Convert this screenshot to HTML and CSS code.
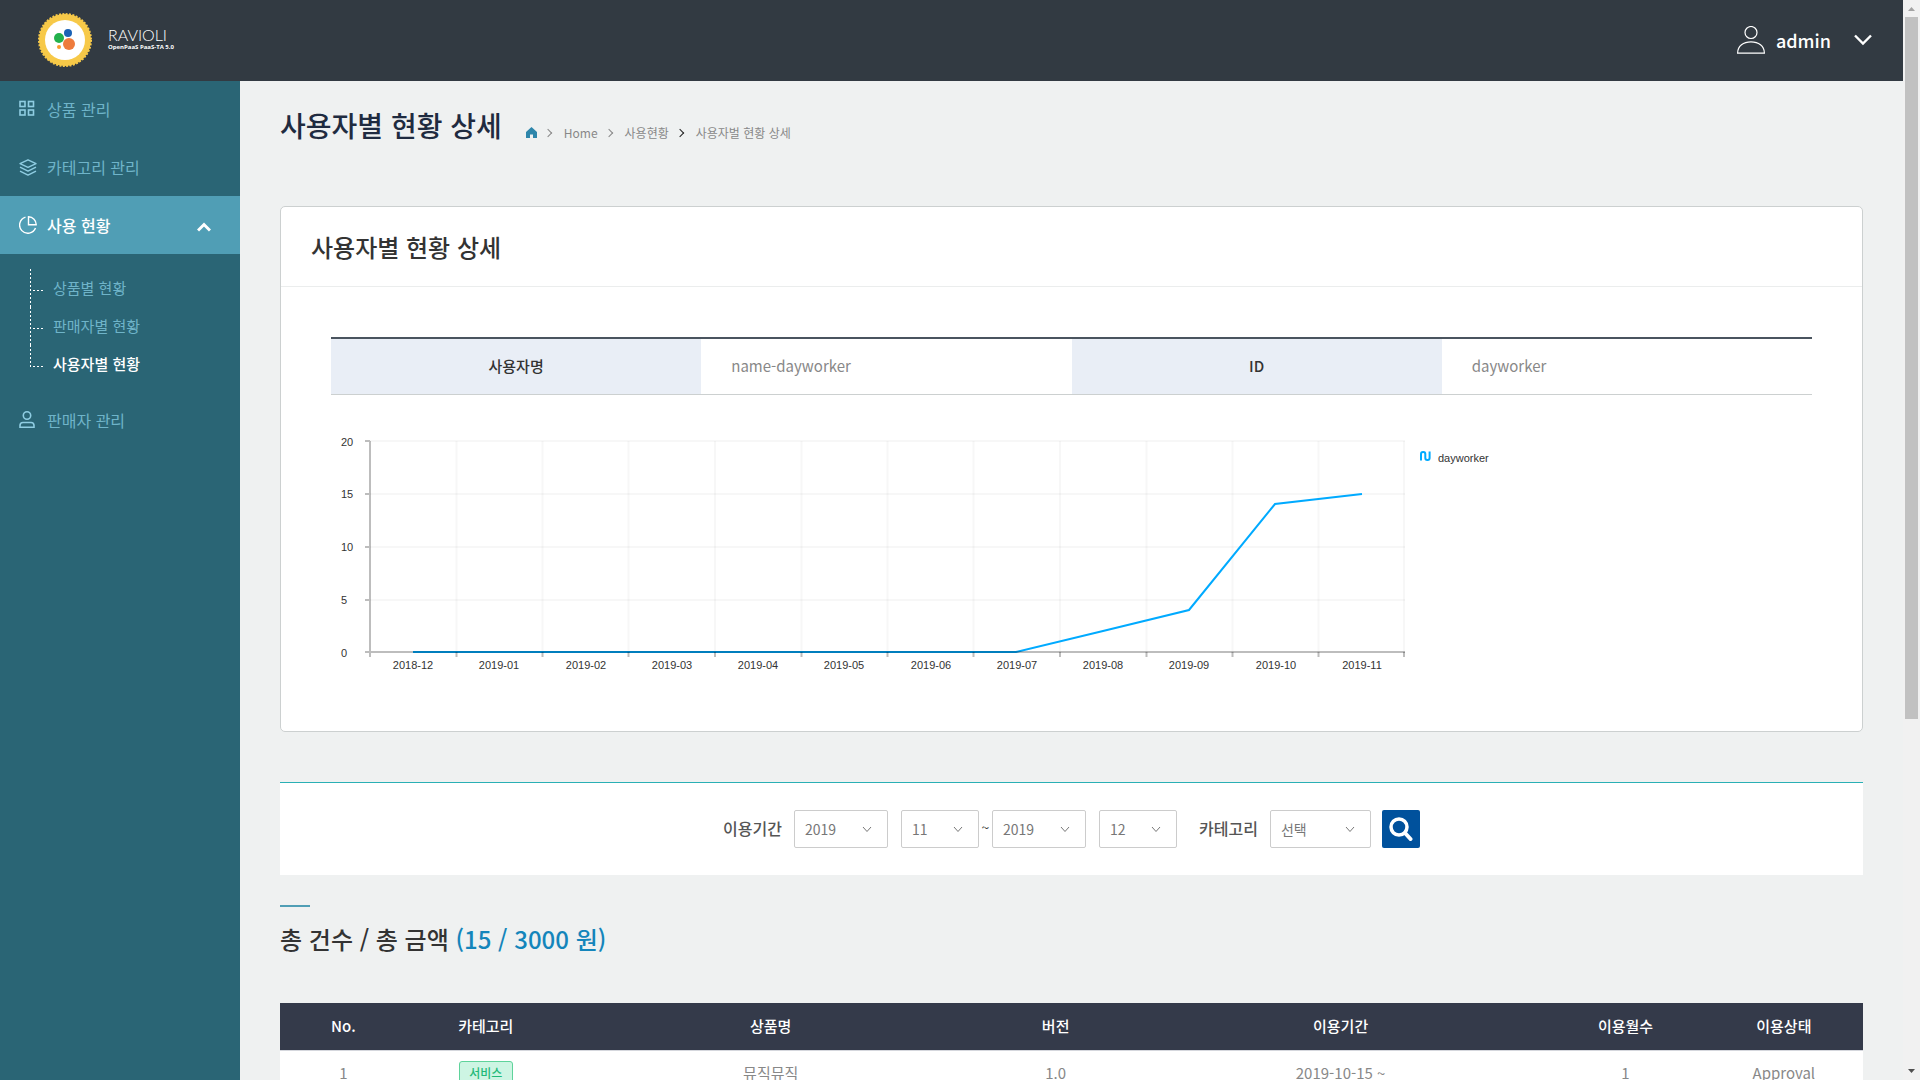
FILE: index.html
```html
<!DOCTYPE html>
<html lang="ko">
<head>
<meta charset="utf-8">
<meta name="viewport" content="width=device-width, initial-scale=1">
<title>사용자별 현황 상세</title>
<link rel="stylesheet" href="styles.css">
</head>
<body>
<div class="app">
  <header class="topbar">
    <a class="logo" href="#">
      <svg class="logo-mark" width="54" height="54" viewBox="0 0 54 54" aria-hidden="true">
        <circle cx="27" cy="27" r="26" fill="none" stroke="#f7c948" stroke-width="2" stroke-dasharray="2 1.4"/>
        <circle cx="27" cy="27" r="26" fill="#f7c948"/>
        <circle cx="27" cy="27" r="20" fill="#fff"/>
        <circle cx="21" cy="25" r="5" fill="#22b14c"/>
        <circle cx="30" cy="20" r="4" fill="#1a62b5"/>
        <circle cx="31" cy="31" r="6" fill="#ee7b3c"/>
        <circle cx="21" cy="34" r="2" fill="#f79a2e"/>
      </svg>
      <span class="logo-text">
        <span class="logo-name">RAVIOLI</span>
        <span class="logo-sub">OpenPaaS PaaS-TA 5.0</span>
      </span>
    </a>
    <button class="account" type="button">
      <svg width="28" height="28" viewBox="0 0 28 28" fill="none" stroke="#fff" stroke-width="1.2" aria-hidden="true">
        <circle cx="14" cy="6.5" r="6"/>
        <path d="M.6 27.2C.6 20 6.500 15.800 14 15.800s13.400 4.200 13.400 11.400z"/>
      </svg>
      <span class="account-name">admin</span>
      <svg class="account-arrow" width="18" height="12" viewBox="0 0 18 12" fill="none" stroke="#fff" stroke-width="2.400" aria-hidden="true"><path d="M1 1.500l8 8 8-8"/></svg>
    </button>
  </header>

  <div class="body">
    <nav class="sidebar">
      <a class="menu" href="#">
        <svg width="18" height="18" viewBox="0 0 18 18" fill="none" stroke="currentColor" stroke-width="1.600" aria-hidden="true">
          <rect x="1" y="1.500" width="5" height="5"/><rect x="9.500" y="1.500" width="5" height="5"/><rect x="1" y="10" width="5" height="5"/><rect x="9.500" y="10" width="5" height="5"/>
        </svg>
        <span>상품 관리</span>
      </a>
      <a class="menu" href="#">
        <svg width="18" height="18" viewBox="0 0 18 18" fill="none" stroke="currentColor" stroke-width="1.400" stroke-linejoin="round" aria-hidden="true">
          <path d="M9 1.800L17 5.600 9 9.400 1 5.600zM1 9.100l8 4 8-4M1 13.100l8 4 8-4"/>
        </svg>
        <span>카테고리 관리</span>
      </a>
      <a class="menu menu-on" href="#">
        <svg width="18" height="18" viewBox="0 0 18 18" fill="none" stroke="currentColor" stroke-width="1.400" aria-hidden="true">
          <path d="M6.500 1.200A8.200 8.200 0 1 0 16.500 12M9.500.8v8h7.700A7.800 7.800 0 0 0 9.500.8z"/>
        </svg>
        <span>사용 현황</span>
        <svg class="menu-arrow" width="14" height="14" viewBox="0 0 14 14" fill="none" stroke="currentColor" stroke-width="3" aria-hidden="true"><path d="M1 12.500l6-6 6 6"/></svg>
      </a>
      <ul class="submenu">
        <li><a href="#">상품별 현황</a></li>
        <li><a href="#">판매자별 현황</a></li>
        <li><a class="sub-on" href="#">사용자별 현황</a></li>
      </ul>
      <a class="menu" href="#">
        <svg width="18" height="18" viewBox="0 0 18 18" fill="none" stroke="currentColor" stroke-width="1.600" aria-hidden="true">
          <circle cx="8" cy="4.500" r="3.700"/>
          <path d="M1 16.200v-1.700a3 3 0 0 1 3-3h8a3 3 0 0 1 3 3v1.700z"/>
        </svg>
        <span>판매자 관리</span>
      </a>
    </nav>

    <main class="content">
      <div class="page-head">
        <h1>사용자별 현황 상세</h1>
        <ol class="crumbs">
          <li><a href="#" aria-label="홈"><svg width="11" height="11" viewBox="0 0 11 11" fill="#2e86ab" aria-hidden="true"><path d="M5.500 0L0 5v6h4V7.500h3V11h4V5z"/></svg></a></li>
          <li><a href="#">Home</a></li>
          <li><a href="#">사용현황</a></li>
          <li><a href="#">사용자벌 현황 상세</a></li>
        </ol>
      </div>

      <section class="card">
        <h2 class="card-title">사용자별 현황 상세</h2>
        <div class="card-body">
          <table class="info">
            <tr>
              <th scope="row">사용자명</th><td>name-dayworker</td>
              <th scope="row">ID</th><td>dayworker</td>
            </tr>
          </table>
          <svg class="chart" width="1200" height="286" viewBox="0 0 1200 286" role="img" aria-label="월별 이용 건수">
            <g class="grid">
              <path d="M39 46H1074M39 99H1074M39 152H1074M39 205H1074"/>
              <path d="M125.500 46V257M211.500 46V257M297.500 46V257M384 46V257M470.500 46V257M556.500 46V257M642.500 46V257M729 46V257M815.500 46V257M901.500 46V257M987.500 46V257M1073 46V257"/>
            </g>
            <path class="series" d="M82 257H685L772 236 858 215 944 109 1031 99"/>
            <g class="axis">
              <path d="M39 46V262M34 257H1074M34 46H39M34 99H39M34 152H39M34 205H39"/>
              <path d="M125.500 257V262M211.500 257V262M297.500 257V262M384 257V262M470.500 257V262M556.500 257V262M642.500 257V262M729 257V262M815.500 257V262M901.500 257V262M987.500 257V262M1073 257V262"/>
            </g>
            <g class="labels">
              <text x="10" y="51">20</text><text x="10" y="103">15</text><text x="10" y="156">10</text><text x="10" y="209">5</text><text x="10" y="262">0</text>
            </g>
            <g class="labels labels-x">
              <text x="82" y="274">2018-12</text><text x="168" y="274">2019-01</text><text x="255" y="274">2019-02</text><text x="341" y="274">2019-03</text><text x="427" y="274">2019-04</text><text x="513" y="274">2019-05</text><text x="600" y="274">2019-06</text><text x="686" y="274">2019-07</text><text x="772" y="274">2019-08</text><text x="858" y="274">2019-09</text><text x="945" y="274">2019-10</text><text x="1031" y="274">2019-11</text>
            </g>
            <path class="series" d="M1090 65.500V59a2 2 0 0 1 2-2h.3a2 2 0 0 1 2 2V63a2 2 0 0 0 2 2h.3a2 2 0 0 0 2-2V56.500"/>
            <text class="labels" x="1107" y="67">dayworker</text>
          </svg>
        </div>
      </section>

      <form class="filter">
        <label class="filter-label" for="fy">이용기간</label>
        <select id="fy" class="sel sel-year"><option>2019</option></select>
        <select class="sel sel-month" aria-label="시작 월"><option>11</option></select>
        <span class="tilde">~</span>
        <select class="sel sel-year" aria-label="종료 연도"><option>2019</option></select>
        <select class="sel sel-month" aria-label="종료 월"><option>12</option></select>
        <label class="filter-label filter-next" for="cat">카테고리</label>
        <select id="cat" class="sel sel-cat"><option>선택</option></select>
        <button class="search" type="button" aria-label="검색">
          <svg width="24" height="24" viewBox="0 0 24 24" fill="none" stroke="#fff" aria-hidden="true"><circle cx="10" cy="10" r="8" stroke-width="3.500"/><path d="M16 16l5.500 6" stroke-width="4" stroke-linecap="round"/></svg>
        </button>
      </form>

      <h2 class="total">총 건수 / 총 금액 <span>(15 / 3000 원)</span></h2>

      <table class="list">
        <colgroup><col class="c8"><col class="c10"><col class="c26"><col class="c10"><col class="c26"><col class="c10"><col class="c10"></colgroup>
        <thead>
          <tr><th>No.</th><th>카테고리</th><th>상품명</th><th>버전</th><th>이용기간</th><th>이용월수</th><th>이용상태</th></tr>
        </thead>
        <tbody>
          <tr><td>1</td><td><span class="badge">서비스</span></td><td>뮤직뮤직</td><td>1.0</td><td>2019-10-15 ~</td><td>1</td><td>Approval</td></tr>
        </tbody>
      </table>
    </main>
  </div>
</div>
<div class="scroll" aria-hidden="true">
  <svg width="17" height="17" viewBox="0 0 17 17" fill="#a3a3a3"><path d="M5 11l3.500-4 3.500 4z"/></svg>
  <div class="thumb"></div>
  <svg class="scroll-down" width="17" height="17" viewBox="0 0 17 17" fill="#505050"><path d="M5 6l3.500 4L12 6z"/></svg>
</div>
</body>
</html>
```
FILE: styles.css
```css
* {
  box-sizing: border-box;
}

body {
  margin: 0;
  background: #eff1f1;
  color: #333;
  font-family: "Noto Sans CJK KR", sans-serif;
  font-size: 15px;
}

a {
  color: inherit;
  text-decoration: none;
}

h1,
h2,
ol,
ul {
  margin: 0;
  padding: 0;
  list-style: none;
}

.app {
  display: flex;
  flex-direction: column;
  height: 100vh;
  padding-right: 17px;
  overflow: hidden;
}

/* Top bar */
.topbar {
  position: relative;
  display: flex;
  flex: none;
  align-items: center;
  justify-content: space-between;
  height: 80px;
  padding: 0 31px 0 38px;
  background: #323a42;
  box-shadow: 0 1px 0 #323a42;
}

.logo {
  display: flex;
  align-items: center;
  gap: 16px;
  color: #fff;
}

.logo-text {
  display: flex;
  flex-direction: column;
}

.logo-name {
  font: 300 16px/14px Lato, sans-serif;
}

.logo-sub {
  font: 700 6px/10px "Open Sans", sans-serif;
}

.account {
  display: flex;
  align-items: center;
  gap: 11px;
  padding: 0;
  border: 0;
  background: none;
  color: #fff;
  font: 500 18px/28px "Noto Sans CJK KR", sans-serif;
}

.account-arrow {
  margin-left: 12px;
}

.body {
  display: flex;
  flex: 1;
  min-height: 0;
}

/* Side menu */
.sidebar {
  flex: none;
  width: 240px;
  background: #2a6575;
}

.menu {
  display: flex;
  align-items: center;
  gap: 10px;
  height: 58px;
  padding: 0 29px 0 19px;
  color: #6fb4c9;
  font-size: 16px;
}

.menu svg {
  color: #8fcde2;
}

.menu-on,
.menu-on svg {
  color: #fff;
}

.menu-on {
  background: #509eb5;
  font-weight: 500;
}

.menu-arrow {
  margin-left: auto;
}

.submenu {
  padding: 15px 0 8px 30px;
}

.submenu li {
  position: relative;
  height: 38px;
  padding-left: 23px;
  color: #6fb4c9;
  line-height: 38px;
}

.submenu li::before {
  position: absolute;
  top: 0;
  left: 0;
  width: 1px;
  height: 38px;
  background: repeating-linear-gradient(#fff 0 2px, transparent 2px 4px);
  content: "";
}

.submenu li:last-child::before {
  height: 22px;
}

.submenu li::after {
  position: absolute;
  top: 21px;
  left: 1px;
  width: 12px;
  height: 1px;
  background: repeating-linear-gradient(90deg, transparent 0 2px, #fff 2px 4px);
  content: "";
}

.sub-on {
  color: #fff;
  font-weight: 500;
}

/* Main column */
.content {
  flex: 1;
  min-width: 0;
  padding: 26px 40px 40px;
}

.page-head {
  display: flex;
  align-items: flex-start;
  gap: 24px;
  height: 40px;
  margin-bottom: 60px;
}

.page-head h1 {
  color: #1f2b40;
  font-size: 28px;
  font-weight: 500;
  line-height: 38px;
}

.crumbs {
  display: flex;
  align-items: center;
  padding-top: 18px;
  color: #888;
  font-size: 12px;
  line-height: 18px;
}

.crumbs li {
  display: flex;
  align-items: center;
}

.crumbs li + li::before {
  width: 5px;
  height: 5px;
  margin: 0 13px 0 8px;
  border: solid #888;
  border-width: 1px 1px 0 0;
  transform: rotate(45deg);
  content: "";
}

.crumbs li:last-child::before {
  border-color: #222;
}

.card {
  border: 1px solid #ccd0d0;
  border-radius: 5px;
  background: #fff;
}

.card-title {
  padding: 0 30px;
  border-bottom: 1px solid #ebeded;
  font-size: 24px;
  font-weight: 500;
  line-height: 79px;
}

.card-body {
  padding: 50px;
}

.info {
  width: 100%;
  border-top: 2px solid #4a545f;
  border-bottom: 1px solid #ccd0d0;
  border-spacing: 0;
  table-layout: fixed;
}

.info th,
.info td {
  height: 55px;
  padding: 0 30px 2px;
}

.info th {
  background: #e9eef6;
  font-weight: 500;
}

.info td {
  color: #888;
}

.chart {
  display: block;
  max-width: 100%;
}

.grid {
  stroke: #000;
  stroke-opacity: .03;
  stroke-width: 2;
}

.axis {
  stroke: #000;
  stroke-opacity: .26;
  stroke-width: 2;
}

.series {
  fill: none;
  stroke: #0af;
  stroke-width: 2;
}

.labels {
  fill: #333;
  font: 11px "Liberation Sans", Arial, sans-serif;
}

.labels-x {
  text-anchor: middle;
}

/* Search filter */
.filter {
  display: flex;
  align-items: center;
  justify-content: center;
  margin: 50px 0 30px;
  padding: 27px 0;
  border-top: 1px solid #2ab0b5;
  background: #fff;
}

.filter-label {
  margin-right: 12px;
  padding-bottom: 2px;
  color: #555;
  font-size: 16px;
  font-weight: 500;
  line-height: 36px;
}

.filter-next {
  margin-left: 22px;
}

.sel {
  height: 38px;
  padding: 0 10px;
  border: 1px solid #ccc;
  border-radius: 2px;
  appearance: none;
  background: #fff url("data:image/svg+xml,%3Csvg xmlns='http://www.w3.org/2000/svg' width='10' height='7' fill='none' stroke='%23777'%3E%3Cpath d='M1 1l4 4.500L9 1'/%3E%3C/svg%3E") no-repeat right 15px center;
  color: #777;
  font: 14px "Noto Sans CJK KR", sans-serif;
}

.sel-year {
  width: 94px;
  margin-right: 13px;
}

.sel-month {
  width: 78px;
}

.sel-cat {
  width: 101px;
}

.tilde {
  width: 13px;
  padding-bottom: 4px;
  font-size: 14px;
  text-align: center;
}

.search {
  display: flex;
  align-items: center;
  justify-content: center;
  width: 38px;
  height: 38px;
  margin-left: 11px;
  padding: 0;
  border: 0;
  border-radius: 2px;
  background: #00519c;
}

/* Totals and list */
.total {
  margin-bottom: 47px;
  font-size: 24px;
  font-weight: 500;
  line-height: 34px;
}

.total::before {
  display: block;
  width: 30px;
  height: 2px;
  margin-bottom: 15px;
  background: #509eb5;
  content: "";
}

.total span {
  color: #1485bb;
}

.list {
  width: 100%;
  border-spacing: 0;
  background: #fff;
  table-layout: fixed;
}

.c8 {
  width: 8%;
}

.c10 {
  width: 10%;
}

.c26 {
  width: 26%;
}

.list th,
.list td {
  height: 48px;
  padding: 0 0 2px;
  border-bottom: 1px solid #d5d7dd;
  text-align: center;
}

.list th {
  background: #343a4a;
  background-clip: padding-box;
  color: #fff;
  font-weight: 500;
}

.list td {
  height: 46px;
  color: #888;
}

.badge {
  display: inline-block;
  width: 54px;
  border: 1px solid #5fd39b;
  border-radius: 3px;
  background: #cdf5e3;
  color: #1fb978;
  font-size: 12px;
  font-weight: 500;
  line-height: 22px;
}

/* Scrollbar of the page */
.scroll {
  position: fixed;
  top: 0;
  right: 0;
  bottom: 0;
  display: flex;
  flex-direction: column;
  width: 17px;
  background: #f1f1f1;
}

.scroll svg {
  flex: none;
}

.thumb {
  height: 65%;
  margin: 0 2px;
  background: #c1c1c1;
}

.scroll-down {
  margin-top: auto;
}
```
